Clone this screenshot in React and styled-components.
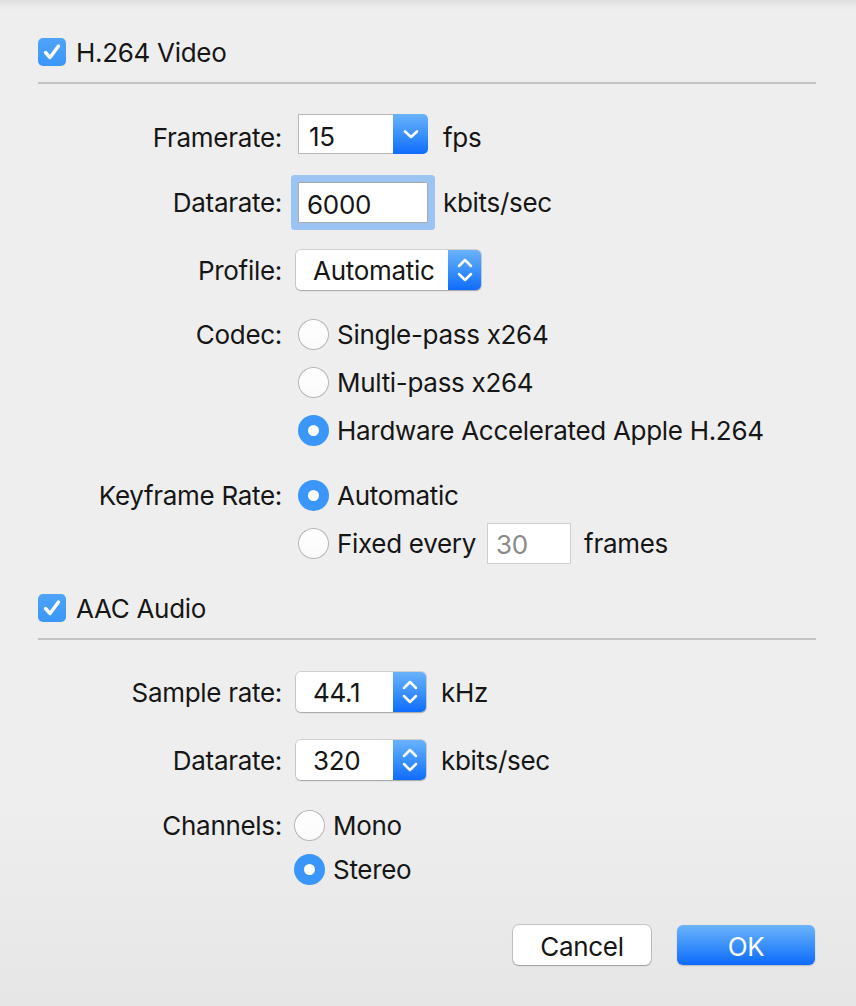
import styled, { createGlobalStyle } from 'styled-components';

const GlobalStyle = createGlobalStyle`
  html, body {
    margin: 0;
    padding: 0;
    background: #eeeeee;
  }
  * {
    box-sizing: border-box;
  }
`;

const Sheet = styled.div`
  width: 856px;
  height: 1006px;
  padding: 38px 40px 0 38px;
  background: linear-gradient(to bottom, #dedede 0px, #ebebeb 6px, #eeeeee 12px, #eeeeee 80%, #e6e6e6 100%);
  font-family: Inter, "Helvetica Neue", "Liberation Sans", sans-serif;
  font-size: 26px;
  letter-spacing: -0.3px;
  color: #161616;
  display: flex;
  flex-direction: column;
`;

const SectionHeader = styled.label`
  display: flex;
  align-items: center;
  gap: 10px;
  height: 28px;
  margin-top: ${p => p.$top || 0}px;
`;

const CheckBox = styled.span`
  width: 28px;
  height: 28px;
  border-radius: 5px;
  background: linear-gradient(to bottom, #4fa3f8, #3a96f6);
  display: flex;
  align-items: center;
  justify-content: center;
`;

const Separator = styled.div`
  height: 2px;
  background: #c3c3c3;
  margin-top: 16px;
`;

const FieldRow = styled.div`
  display: grid;
  grid-template-columns: 244px 1fr;
  column-gap: 16px;
  margin-top: ${p => p.$top}px;
`;

const Label = styled.div`
  height: ${p => p.$h}px;
  display: flex;
  align-items: center;
  justify-content: flex-end;
  padding-top: ${p => p.$nudge || 0}px;
  white-space: nowrap;
`;

const Controls = styled.div`
  display: flex;
  align-items: center;
  gap: 15px;
  height: ${p => p.$h}px;
`;

const Stack = styled.div`
  display: flex;
  flex-direction: column;
  margin-left: ${p => p.$shift || 0}px;
`;

const Unit = styled.span`
  white-space: nowrap;
  padding-top: ${p => p.$nudge || 0}px;
`;

const Combo = styled.div`
  display: flex;
  height: 40px;
`;

const ComboField = styled.div`
  width: 95px;
  background: #fff;
  border: 1px solid #b8b8b8;
  border-right: none;
  padding-left: 10px;
  display: flex;
  align-items: center;
  padding-top: 4px;
`;

const BlueSide = styled.div`
  width: ${p => p.$w}px;
  background: linear-gradient(to bottom, #6ab2fb 0%, #3b92fb 50%, #0f6cfc 100%);
  border-radius: 0 5px 5px 0;
  display: flex;
  align-items: center;
  justify-content: center;
`;

const PopUp = styled.div`
  display: flex;
  height: 40px;
  margin-left: -2px;
  border-radius: 5px;
  box-shadow: 0 0 0 1px rgba(0, 0, 0, 0.12), 0 1px 1.5px rgba(0, 0, 0, 0.22);
`;

const PopUpValue = styled.div`
  width: ${p => p.$w}px;
  background: #fff;
  border-radius: 5px 0 0 5px;
  display: flex;
  align-items: center;
  padding-left: 17px;
`;

const TextField = styled.div`
  width: 130px;
  height: 41px;
  background: #fff;
  border: 1px solid #a9a9a9;
  display: flex;
  align-items: center;
  padding: 3px 0 0 8px;
  ${p => p.$focused && `
    box-shadow: 0 0 0 7px #9cc4f2;
    border-radius: 1px;
  `}
`;

const SmallField = styled.div`
  width: 84px;
  height: 41px;
  background: #fff;
  border: 1px solid #cfcfcf;
  display: flex;
  align-items: center;
  padding: 3px 0 0 8px;
  color: #8a8a8a;
  margin-left: 3px;
  margin-right: 5px;
`;

const RadioLine = styled.label`
  display: flex;
  align-items: center;
  gap: 8px;
  height: ${p => p.$h}px;
  white-space: nowrap;
`;

const RadioDot = styled.span`
  width: 31px;
  height: 31px;
  border-radius: 50%;
  flex: none;
  display: flex;
  align-items: center;
  justify-content: center;
  ${p => p.$on ? `
    background: #3a96f8;
  ` : `
    background: linear-gradient(to bottom, #ffffff, #fafafa);
    box-shadow: inset 0 0 0 1px #b5b5b5;
  `}
  &::after {
    content: '';
    width: 11px;
    height: 11px;
    border-radius: 50%;
    background: #fff;
    display: ${p => p.$on ? 'block' : 'none'};
  }
`;

const ButtonBar = styled.div`
  display: flex;
  justify-content: flex-end;
  gap: 26px;
  margin-top: 34px;
  padding-right: 1px;
`;

const Button = styled.button`
  width: 138px;
  height: 40px;
  border-radius: 6px;
  font: inherit;
  letter-spacing: inherit;
  padding: 2px 0 0;
  ${p => p.$primary ? `
    border: none;
    color: #fff;
    background: linear-gradient(to bottom, #6cb3fb 0%, #3a91fb 50%, #0c6afc 100%);
    box-shadow: 0 1px 1.5px rgba(0, 0, 0, 0.2);
  ` : `
    border: none;
    color: #161616;
    background: #fff;
    box-shadow: 0 0 0 1px rgba(0, 0, 0, 0.15), 0 1px 1.5px rgba(0, 0, 0, 0.2);
  `}
`;

function Check() {
  return (
    <svg width="24" height="24" viewBox="0 0 24 24">
      <path d="M5.5 12.5 L10 17.5 L18.5 6" fill="none" stroke="#fff" strokeWidth="3.4" strokeLinecap="round" strokeLinejoin="round" />
    </svg>
  );
}

function ChevronDown() {
  return (
    <svg width="18" height="12" viewBox="0 0 18 12">
      <path d="M3 3.5 L9 9 L15 3.5" fill="none" stroke="#fff" strokeWidth="2.6" strokeLinecap="round" strokeLinejoin="round" />
    </svg>
  );
}

function UpDown() {
  return (
    <svg width="18" height="28" viewBox="0 0 18 28">
      <path d="M3 10 L9 4 L15 10" fill="none" stroke="#fff" strokeWidth="2.5" strokeLinecap="round" strokeLinejoin="round" />
      <path d="M3 18 L9 24 L15 18" fill="none" stroke="#fff" strokeWidth="2.5" strokeLinecap="round" strokeLinejoin="round" />
    </svg>
  );
}

function Radio({ on, children, h = 48 }) {
  return (
    <RadioLine $h={h}>
      <RadioDot $on={on} />
      {children}
    </RadioLine>
  );
}

function Select({ value, width, arrow }) {
  return (
    <PopUp>
      <PopUpValue $w={width}>{value}</PopUpValue>
      <BlueSide $w={arrow}>
        <UpDown />
      </BlueSide>
    </PopUp>
  );
}

export default function App() {
  return (
    <>
      <GlobalStyle />
      <Sheet>
        <SectionHeader>
          <CheckBox><Check /></CheckBox>
          H.264 Video
        </SectionHeader>
        <Separator />

        <FieldRow $top={30}>
          <Label $h={40} $nudge={6}>Framerate:</Label>
          <Controls $h={40}>
            <Combo>
              <ComboField>15</ComboField>
              <BlueSide $w={35}><ChevronDown /></BlueSide>
            </Combo>
            <Unit $nudge={6}>fps</Unit>
          </Controls>
        </FieldRow>

        <FieldRow $top={28}>
          <Label $h={41}>Datarate:</Label>
          <Controls $h={41}>
            <TextField $focused>6000</TextField>
            <Unit>kbits/sec</Unit>
          </Controls>
        </FieldRow>

        <FieldRow $top={27}>
          <Label $h={40}>Profile:</Label>
          <Controls $h={40}>
            <Select value="Automatic" width={152} arrow={33} />
          </Controls>
        </FieldRow>

        <FieldRow $top={20}>
          <Label $h={48}>Codec:</Label>
          <Stack>
            <Radio>Single-pass x264</Radio>
            <Radio>Multi-pass x264</Radio>
            <Radio on>Hardware Accelerated Apple H.264</Radio>
          </Stack>
        </FieldRow>

        <FieldRow $top={17}>
          <Label $h={48}>Keyframe Rate:</Label>
          <Stack>
            <Radio on>Automatic</Radio>
            <Radio>
              Fixed every
              <SmallField>30</SmallField>
              frames
            </Radio>
          </Stack>
        </FieldRow>

        <SectionHeader $top={27}>
          <CheckBox><Check /></CheckBox>
          AAC Audio
        </SectionHeader>
        <Separator />

        <FieldRow $top={32}>
          <Label $h={40}>Sample rate:</Label>
          <Controls $h={40}>
            <Select value="44.1" width={97} arrow={33} />
            <Unit>kHz</Unit>
          </Controls>
        </FieldRow>

        <FieldRow $top={28}>
          <Label $h={40}>Datarate:</Label>
          <Controls $h={40}>
            <Select value="320" width={97} arrow={33} />
            <Unit>kbits/sec</Unit>
          </Controls>
        </FieldRow>

        <FieldRow $top={23}>
          <Label $h={44}>Channels:</Label>
          <Stack $shift={-4}>
            <Radio h={44}>Mono</Radio>
            <Radio h={44} on>Stereo</Radio>
          </Stack>
        </FieldRow>

        <ButtonBar>
          <Button>Cancel</Button>
          <Button $primary>OK</Button>
        </ButtonBar>
      </Sheet>
    </>
  );
}
